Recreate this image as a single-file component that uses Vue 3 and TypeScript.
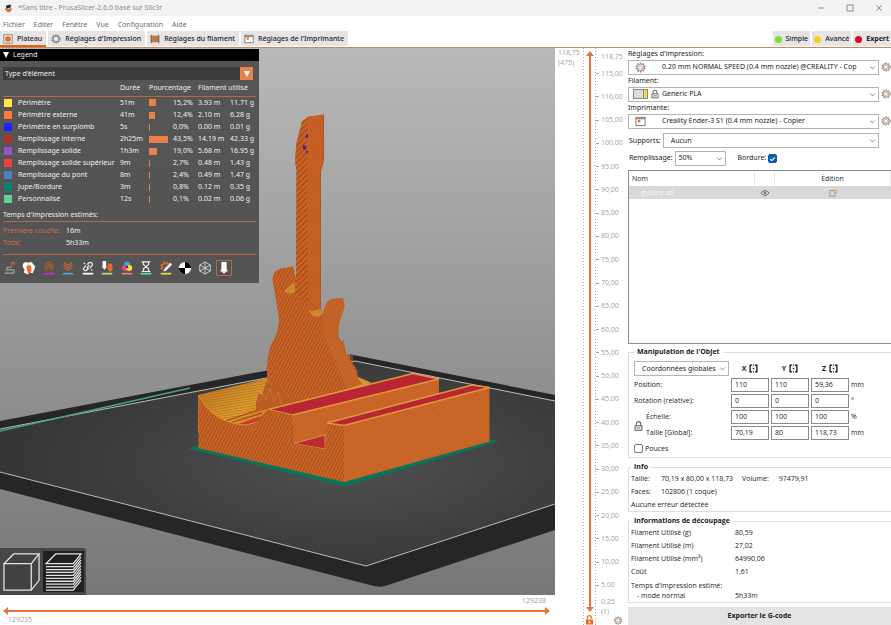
<script setup lang="ts">
import { ref } from 'vue'

interface LegendRow { color: string; name: string; time: string; bar: number; pct: string; m: string; g: string }

const menus = ['Fichier', 'Editer', 'Fenêtre', 'Vue', 'Configuration', 'Aide']
const tabs = ["Plateau", "Réglages d'Impression", 'Réglages du filament', "Réglages de l'Imprimante"]
const modes = [
  { label: 'Simple', color: '#7be03a' },
  { label: 'Avancé', color: '#f2d21a' },
  { label: 'Expert', color: '#d3101c' },
]
const legend: LegendRow[] = [
  { color: '#ffe64d', name: 'Périmètre', time: '51m', bar: 7, pct: '15,2%', m: '3.93 m', g: '11.71 g' },
  { color: '#ff7d38', name: 'Périmètre externe', time: '41m', bar: 6, pct: '12,4%', m: '2.10 m', g: '6.28 g' },
  { color: '#1f1fff', name: 'Périmètre en surplomb', time: '5s', bar: 1, pct: '0,0%', m: '0.00 m', g: '0.01 g' },
  { color: '#b03029', name: 'Remplissage interne', time: '2h25m', bar: 19, pct: '43,5%', m: '14.19 m', g: '42.33 g' },
  { color: '#9654cc', name: 'Remplissage solide', time: '1h3m', bar: 8, pct: '19,0%', m: '5.68 m', g: '16.95 g' },
  { color: '#f04040', name: 'Remplissage solide supérieur', time: '9m', bar: 1, pct: '2,7%', m: '0.48 m', g: '1.43 g' },
  { color: '#4d80ba', name: 'Remplissage du pont', time: '8m', bar: 1, pct: '2,4%', m: '0.49 m', g: '1.47 g' },
  { color: '#00876e', name: 'Jupe/Bordure', time: '3m', bar: 1, pct: '0,8%', m: '0.12 m', g: '0.35 g' },
  { color: '#5ed194', name: 'Personnalisé', time: '12s', bar: 1, pct: '0,1%', m: '0.02 m', g: '0.06 g' },
]
const heights = Array.from({ length: 23 }, (_, i) => `${115 - i * 5},00`)
const presets = [
  { id: 'print', label: "Réglages d'impression:", value: '0.20 mm NORMAL SPEED (0.4 mm nozzle) @CREALITY - Cop' },
  { id: 'filament', label: 'Filament:', value: 'Generic PLA' },
  { id: 'printer', label: 'Imprimante:', value: 'Creality Ender-3 S1 (0.4 mm nozzle) - Copier' },
]
const axes = ['X', 'Y', 'Z']
const transforms = ref([
  { label: 'Position:', values: ['110', '110', '59,36'], unit: 'mm', indent: false },
  { label: 'Rotation (relative):', values: ['0', '0', '0'], unit: '°', indent: false },
  { label: 'Échelle:', values: ['100', '100', '100'], unit: '%', indent: true },
  { label: 'Taille [Global]:', values: ['70,19', '80', '118,73'], unit: 'mm', indent: true },
])
const slicing = [
  ['Filament Utilisé (g)', '80,59'],
  ['Filament Utilisé (m)', '27,02'],
  ['Filament Utilisé (mm³)', '64990,06'],
  ['Coût', '1,61'],
]
const brim = ref(true)
const inches = ref(false)
</script>

<template>
  <div class="app">
    <svg class="defs" width="0" height="0" aria-hidden="true">
      <symbol id="gear" viewBox="0 0 12 12">
        <circle cx="6" cy="6" r="4.6" fill="none" stroke="#8a8583" stroke-width="1.6" stroke-dasharray="1.8 1.1" />
        <circle cx="6" cy="6" r="3.7" fill="#f7ece4" stroke="#8f8a88" stroke-width=".8" />
        <circle cx="6" cy="6" r="2" fill="#fff" stroke="#e3a37c" stroke-width=".9" />
      </symbol>
      <symbol id="printer" viewBox="0 0 12 12">
        <rect x="1" y="1.5" width="10" height="9" fill="#fff" stroke="#77706d" />
        <path d="M1 3h10" stroke="#77706d" />
        <path d="M3 4h3v2l-1.5 1.4L3 6z" fill="#e8743b" />
      </symbol>
      <symbol id="lock" viewBox="0 0 10 12">
        <path d="M2.6 6V3.6a2.4 2.4 0 0 1 4.8 0V6" fill="none" stroke="#6b6b6b" stroke-width="1.3" />
        <rect x="1.2" y="5.8" width="7.6" height="5" fill="#f4f4f4" stroke="#6b6b6b" stroke-width="1.2" />
        <path d="M3 8.3h4" stroke="#6b6b6b" />
      </symbol>
    </svg>

    <header class="titlebar">
      <svg class="logo" viewBox="0 0 10 10">
        <path d="M2 3.5C2.4 1 5 .4 8 1.2L7.4 4 3.6 5.4z" fill="#303030" />
        <path d="M8.6 4.2C9 7.6 7 9.6 3.6 9.2L2.4 6.8z" fill="#e5692b" />
        <path d="M1 5.6l2-1v3z" fill="#303030" />
      </svg>
      <h1>*Sans titre - PrusaSlicer-2.6.0 basé sur Slic3r</h1>
      <div class="wm">
        <button aria-label="Réduire"><svg viewBox="0 0 8 8"><path d="M1 4h6" /></svg></button>
        <button aria-label="Agrandir"><svg viewBox="0 0 8 8"><path d="M1 1h6v6H1z" /></svg></button>
        <button aria-label="Fermer"><svg viewBox="0 0 8 8"><path d="M1 1l6 6M7 1L1 7" /></svg></button>
      </div>
    </header>

    <nav class="menubar"><button v-for="m in menus" :key="m">{{ m }}</button></nav>

    <div class="tabbar">
      <button v-for="(t, i) in tabs" :key="t" class="tab" :class="{ active: i === 0 }">
        <svg v-if="i === 0" viewBox="0 0 12 12"><rect x="1" y="1" width="10" height="10" fill="#eee" stroke="#777" /><circle cx="6" cy="6" r="3.4" fill="#ed6b21" /></svg>
        <svg v-else-if="i === 1" viewBox="0 0 12 12"><circle cx="6" cy="6" r="4.8" fill="none" stroke="#777" stroke-width="1.4" stroke-dasharray="1.9 1.1" /><circle cx="6" cy="6" r="3.6" fill="#d8d4d2" stroke="#777" /><circle cx="6" cy="6" r="1.8" fill="#f4f0ee" /></svg>
        <svg v-else-if="i === 2" viewBox="0 0 12 12"><rect x="1" y="2" width="10" height="8" fill="#c17a48" /><path d="M1.500 1v10M10.500 1v10" stroke="#6d6560" stroke-width="1.2" /></svg>
        <svg v-else viewBox="0 0 12 12"><use href="#printer" /></svg>
        <span>{{ t }}</span>
      </button>
      <div class="modes">
        <button v-for="m in modes" :key="m.label" class="tab" :class="{ strong: m.label === 'Expert' }">
          <i class="dot" :style="{ background: m.color }"></i><span>{{ m.label }}</span>
        </button>
      </div>
    </div>

    <main class="body">
      <section class="viewer">
        <div class="scene">
          <svg class="model" viewBox="0 48 555 547" preserveAspectRatio="xMidYMid slice">
            <defs>
              <linearGradient id="bg" x1="0" y1="0" x2="0" y2="1"><stop offset="0" stop-color="#b9b9b9" /><stop offset="1" stop-color="#777" /></linearGradient>
              <radialGradient id="bed" cx=".62" cy=".5" r=".6"><stop offset="0" stop-color="#505050" /><stop offset=".6" stop-color="#404040" /><stop offset="1" stop-color="#363636" /></radialGradient>
              <linearGradient id="bowl" x1="0" y1="0" x2="1" y2=".5"><stop offset="0" stop-color="#b86d22" /><stop offset=".45" stop-color="#dda02d" /><stop offset="1" stop-color="#b9571f" /></linearGradient>
              <pattern id="steep" width="3" height="3" patternUnits="userSpaceOnUse" patternTransform="rotate(27)"><rect width="3" height="3" fill="#c86426" /><rect width="1" height="3" fill="#a9501e" /></pattern>
              <pattern id="slash" width="4" height="4" patternUnits="userSpaceOnUse" patternTransform="rotate(45)"><rect width="4" height="4" fill="#ca6424" /><rect width="1.400" height="4" fill="#a14a1a" /></pattern>
              <pattern id="back" width="3" height="3" patternUnits="userSpaceOnUse" patternTransform="rotate(-28)"><rect width="3" height="3" fill="#c96225" /><rect width="1" height="3" fill="#bb5821" /></pattern>
              <pattern id="fine" width="2.500" height="2.500" patternUnits="userSpaceOnUse" patternTransform="rotate(32)"><rect width="2.500" height="2.500" fill="#cc6829" /><rect width=".8" height="2.500" fill="#c05e23" /></pattern>
              <pattern id="rows" width="4" height="2.500" patternUnits="userSpaceOnUse" patternTransform="rotate(-9)"><rect width="4" height="1" fill="#a85a1b" opacity=".5" /></pattern>
            </defs>
            <rect x="-600" y="48" width="1755" height="547" fill="url(#bg)" />
            <path d="M0 421L351 354.500L555 395V530L385 586Q378 588 370 585L0 489z" fill="#262626" />
            <path d="M0 429L355 361L555 401V504L366 566L0 472z" fill="url(#bed)" />
            <path d="M555 401L355 361L0 429M0 472L366 566L555 504" fill="none" stroke="#b9bdbb" />
            <path d="M0 431L190 388" stroke="#4f9f87" stroke-width="1.300" />
            <path d="M188 448.500L198 446L344 480L489 439L499 441.500L344 486.500z" fill="#0b7359" />
            <path d="M198 395L268 378L300 376L366 384L300 425L198 432z" fill="url(#bowl)" />
            <path d="M198 395L268 378L300 400L265 418L198 425z" fill="url(#rows)" />
            <path d="M356 376L372 383L352 389z" fill="#d39330" />
            <path d="M238 424L262 416L262 420L246 425z" fill="#cb3836" />
            <path d="M225 421L262 409M230 423L262 413" stroke="#a33a20" />
            <path d="M256 403L259 393L262 395L266 382L300 386L302 404L268 409L256 412z" fill="#b95c23" />
            <path d="M259 402l4-8 3 6 4-12 4 14 4-10 4 14" fill="none" stroke="#c9712f" />
            <path d="M272.500 280Q273 271 280 268.500L293.500 266.500L295 276H321V307L322 315L327 302L332 299L342.500 298Q346 304 343 312Q336 327 339 338L344 344L346.500 355L350 354L351 362L356 368L357 377L362 384L300 403L288 400L280 388L268 384Q265 364 270 347Q278 334 279 320Q276 300 272.500 280z" fill="url(#steep)" />
            <path d="M327 302L332 299L342.500 298Q346 304 343 312Q336 327 339 338L326 340L322 315z" fill="#c66428" opacity=".75" />
            <path d="M326 340L339 340L346 354L352 366L361 384L347 388z" fill="#c5682a" opacity=".8" />
            <path d="M343.500 340V354M352 355V370M357 370V380" stroke="#c4622a" />
            <path d="M284 291Q288 288 291 284L295 283V292Q289 296 284 291z" fill="#cf8632" />
            <path d="M308 310Q314 312 321 308L322 315Q314 320 308 310z" fill="#cf8632" />
            <path d="M302 121.500L308.500 116.500L323.500 114.500V160L320.500 172V309L296 292L296.500 170L295 161L296.500 143z" fill="url(#back)" />
            <path d="M302 121.500L307 118L308 310L296 292L296.500 170L295 161L296.500 143z" fill="url(#slash)" />
            <path d="M323.500 114.500V160L320.500 172V309" fill="none" stroke="#b35420" />
            <path d="M303 145l3 1v4l-3-1zM306 134h2v4h-2zM306 151h2v2h-2z" fill="#56209a" />
            <path d="M292.500 415L439 379V412L325 449L292.500 443z" fill="url(#fine)" />
            <path d="M294 443.500L325 435V449z" fill="#bd2831" stroke="#e0a043" stroke-width=".8" />
            <path d="M268 409.500L413 373.500L439 379L292.500 415z" fill="#b82634" stroke="#e2963f" stroke-width="1.400" />
            <path d="M198.500 395Q212 423 246 425L257 422L268 409.500L292.500 415V443.500L325 449.500L327 423L344 425V482L198.500 448z" fill="url(#steep)" />
            <path d="M344 425L489.500 387.500V441.500L344 482z" fill="url(#fine)" />
            <path d="M390 431Q410 412 448 407M395 437L443 413M401 441L430 421" fill="none" stroke="#bb5f26" stroke-width=".8" stroke-dasharray="4 4" />
            <path d="M327 423L472 385L489.500 387.500L344 425.500z" fill="#b82634" stroke="#e2963f" stroke-width="1.400" />
            <path d="M198.500 395Q212 423 246 425L257 422" fill="none" stroke="#d58d36" />
          </svg>

          <aside class="legend">
            <div class="lg-title"><i class="tri"></i>Legend</div>
            <div class="lg-body">
              <button class="lg-select"><span>Type d'élément</span><span class="lg-arrow"><i class="tri"></i></span></button>
              <table>
                <colgroup><col class="c1" /><col class="c2" /><col class="c3" /><col class="c4" /><col class="c5" /><col class="c6" /><col /></colgroup>
                <thead><tr><th></th><th></th><th>Durée</th><th colspan="2">Pourcentage</th><th colspan="2">Filament utilisé</th></tr></thead>
                <tbody>
                  <tr v-for="r in legend" :key="r.name">
                    <td><i class="sw" :style="{ background: r.color }"></i></td>
                    <td>{{ r.name }}</td><td>{{ r.time }}</td>
                    <td><i class="bar" :style="{ width: r.bar + 'px' }"></i></td>
                    <td>{{ r.pct }}</td><td>{{ r.m }}</td><td>{{ r.g }}</td>
                  </tr>
                </tbody>
              </table>
              <p class="est">Temps d'impression estimés:</p>
              <dl><dt>Première couche:</dt><dd>16m</dd><dt>Total:</dt><dd>5h33m</dd></dl>
              <div class="tools">
                <button aria-label="Déplacements"><svg viewBox="0 0 16 16"><path d="M2 14h8q3 0 3-2t-3-2H6q-2 0-2-1.500T6 7h4" fill="none" stroke="#999" stroke-width="1.500" /><path d="M10 6V2h4M12 4V1M3 11h3" fill="none" stroke="#b5653a" stroke-width="1.500" /></svg></button>
                <button aria-label="Essuyage"><svg viewBox="0 0 16 16"><path d="M1 3l3-2 3 1 4-1 2 3 2 2-1 4-2 4-3-1-3 2-4-2 1-3-2-3z" fill="#fff" /><path d="M5 8l1-4 1 2 1-3 1 3 1-2 1 5-1 5H7z" fill="#ed6b21" /></svg></button>
                <button aria-label="Rétractions"><svg viewBox="0 0 16 16"><path d="M3 5l5-4 5 4M3 8l5-4 5 4M3 11l5-4 5 4" fill="none" stroke="#c5592a" stroke-width="1.300" /><path d="M2 14.500h12" stroke="#c12bc6" stroke-width="2" /></svg></button>
                <button aria-label="Réinsertions"><svg viewBox="0 0 16 16"><path d="M3 1l5 4 5-4M3 4l5 4 5-4M3 7l5 4 5-4" fill="none" stroke="#ce692f" stroke-width="1.300" /><path d="M2 14.500h12" stroke="#48a9d6" stroke-width="2" /></svg></button>
                <button aria-label="Coutures"><svg viewBox="0 0 16 16"><path d="M7 4l2-2q2-1 3.500.5T12 6l-2 2M9 8l-2 2q-2 2-3.500.5T4 7l2-2M6.500 8.500l3-4M3 2l1.500 1.500M11.500 9.500L13 11" fill="none" stroke="#eee" stroke-width="1.300" /><path d="M2 14.500h12" stroke="#fff" stroke-width="2" /></svg></button>
                <button aria-label="Changements d'outil"><svg viewBox="0 0 16 16"><path d="M3 0h4v6h1l-3 4-3-4h1z" fill="#fff" /><path d="M9 3h5v5h1l-3.500 5L8 8h1z" fill="#ed6b21" /><path d="M2 14.500h12" stroke="#d5cd74" stroke-width="2" /></svg></button>
                <button aria-label="Changements de couleur"><svg viewBox="0 0 16 16"><circle cx="8" cy="4" r="3.500" fill="#35a5e4" /><circle cx="5.500" cy="8" r="3.500" fill="#ed3f91" /><circle cx="10.500" cy="8" r="3.500" fill="#ffdc35" /><circle cx="8" cy="6.800" r="1.500" fill="#463838" /><path d="M2 14.500h12" stroke="#dc8b75" stroke-width="2" /></svg></button>
                <button aria-label="Pauses"><svg viewBox="0 0 16 16"><path d="M3 1h10M3 12h10M5 1v3l3 2.500L5 9v3M11 1v3L8 6.500 11 9v3" fill="none" stroke="#eee" stroke-width="1.300" /><path d="M2 14.500h12" stroke="#52e694" stroke-width="2" /></svg></button>
                <button aria-label="G-codes personnalisés"><svg viewBox="0 0 16 16"><path d="M4 9a4 4 0 1 1 7-5" fill="none" stroke="#ed6b21" stroke-width="3" stroke-dasharray="2.500 .8" /><path d="M5 12l1-3 7-7 2 2-7 7z" fill="#fff" /><path d="M2 14.500h12" stroke="#e5df3c" stroke-width="2" /></svg></button>
                <button aria-label="Centre de gravité"><svg viewBox="0 0 16 16"><circle cx="8" cy="8" r="7" fill="#fff" /><path d="M8 8V1a7 7 0 0 1 7 7zM8 8v7a7 7 0 0 1-7-7z" fill="#000" /></svg></button>
                <button aria-label="Coques"><svg viewBox="0 0 16 16"><path d="M8 1l6 3.500v7L8 15l-6-3.500v-7zM2 4.500L8 8l6-3.500M8 8v7M8 1v7M2 11.500L8 8l6 3.500" fill="none" stroke="#ddd" /></svg></button>
                <button aria-label="Marqueur d'outil" class="on"><svg viewBox="0 0 16 16"><path d="M5 1h6v9h1v2h-2l-1 2H7l-1-2H4v-2h1z" fill="#fff" /></svg></button>
              </div>
            </div>
          </aside>

          <div class="views">
            <button aria-label="Vue 3D"><svg viewBox="0 0 40 40"><path d="M2 12h28v27H2zM2 12L12 2h26L30 12M38 2v27L30 39" fill="#414141" stroke="#e4e4e4" stroke-width="1.300" /></svg></button>
            <button aria-label="Aperçu" class="on"><svg viewBox="0 0 40 40"><path d="M2 12L12 2h26L30 12zM2 15h28l8-10M2 18h28l8-10M2 21h28l8-10M2 24h28l8-10M2 27h28l8-10M2 30h28l8-10M2 33h28l8-10M2 36h28l8-10M2 39h28l8-10" fill="none" stroke="#e4e4e4" stroke-width="1.300" /></svg></button>
          </div>
        </div>
        <div class="hslider">
          <span class="hi">129238</span>
          <div class="htrack"><i class="hleft"></i><i class="hline"></i><i class="hright"></i></div>
          <span class="lo">129235</span>
        </div>
      </section>

      <section class="ruler">
        <div class="cur">118,75<br />(475)</div>
        <div class="vtrack">
          <i class="up"></i><i class="line"></i><i class="down"></i>
          <svg class="unlock" viewBox="0 0 10 11"><path d="M2.500 5V3a2.300 2.300 0 0 1 4.600 0v1" fill="none" stroke="#ed6b21" stroke-width="1.500" /><path d="M1 5h8v5.500H1z" fill="#ed6b21" /><path d="M4 7h2v2H4z" fill="#fff" /></svg>
        </div>
        <div class="scale">
          <span class="first">118,75</span>
          <div class="marks"><span v-for="h in heights" :key="h">{{ h }}</span></div>
          <span class="last">0,25<br />(1)</span>
          <svg class="gear"><use href="#gear" /></svg>
        </div>
      </section>

      <aside class="side">
        <div class="presets">
          <template v-for="p in presets" :key="p.id">
            <label :for="p.id">{{ p.label }}</label>
            <div class="prow">
              <div class="combo">
                <svg v-if="p.id === 'print'" class="pic"><use href="#gear" /></svg>
                <span v-else-if="p.id === 'filament'" class="pic fil"><i></i><svg><use href="#lock" /></svg></span>
                <svg v-else class="pic"><use href="#printer" /></svg>
                <select :id="p.id"><option>{{ p.value }}</option></select>
                <svg class="chev" viewBox="0 0 8 8"><path d="M1.500 3L4 5.500 6.500 3" /></svg>
              </div>
              <button class="gearbtn" aria-label="Modifier le préréglage"><svg><use href="#gear" /></svg></button>
            </div>
          </template>
        </div>
        <div class="supports">
          <label for="sup">Supports:</label>
          <div class="combo"><select id="sup"><option>Aucun</option></select><svg class="chev" viewBox="0 0 8 8"><path d="M1.500 3L4 5.500 6.500 3" /></svg></div>
        </div>
        <div class="infill">
          <label for="inf">Remplissage:</label>
          <div class="combo"><select id="inf"><option>50%</option></select><svg class="chev" viewBox="0 0 8 8"><path d="M1.500 3L4 5.500 6.500 3" /></svg></div>
          <label for="brim">Bordure:</label>
          <input id="brim" v-model="brim" type="checkbox" />
        </div>

        <div class="objects">
          <table>
            <colgroup><col /><col class="o2" /><col class="o3" /></colgroup>
            <thead><tr><th>Nom</th><th></th><th>Édition</th></tr></thead>
            <tbody><tr>
              <td class="file">guitare.stl</td>
              <td><svg viewBox="0 0 12 8"><path d="M1 4q5-6 10 0q-5 6-10 0z" fill="none" stroke="#777" stroke-width="1.200" /><circle cx="6" cy="4" r="1.700" fill="#777" /></svg></td>
              <td><svg viewBox="0 0 12 10"><path d="M7 2H2v7h7V6" fill="none" stroke="#8d8d8d" /><circle cx="9" cy="3" r="2" fill="#f7d7bf" stroke="#e8833f" stroke-width="1.200" /></svg></td>
            </tr></tbody>
          </table>
        </div>

        <fieldset class="manip">
          <legend>Manipulation de l'Objet</legend>
          <div class="mgrid">
            <div class="combo coord"><select aria-label="Coordonnées"><option>Coordonnées globales</option></select><svg class="chev" viewBox="0 0 8 8"><path d="M1.500 3L4 5.500 6.500 3" /></svg></div>
            <span v-for="a in axes" :key="a" class="axis"><b>{{ a }}</b><svg viewBox="0 0 10 10"><path d="M3.500 1.200H1.200v7.600h2.300M6.500 1.200h2.300v7.600H6.500" fill="none" stroke="#111" stroke-width="1.400" /><path d="M4.500 1.200h1M4.500 8.800h1M4.300 5h1.400" stroke="#111" stroke-width="1.400" /></svg></span>
            <span></span>
            <template v-for="t in transforms" :key="t.label">
              <span class="tl" :class="{ indent: t.indent }">{{ t.label }}</span>
              <input v-for="(a, i) in axes" :key="a" v-model="t.values[i]" type="text" :aria-label="t.label + ' ' + a" />
              <span class="unit">{{ t.unit }}</span>
            </template>
            <svg class="ratio"><use href="#lock" /></svg>
          </div>
          <label class="inches"><input v-model="inches" type="checkbox" />Pouces</label>
        </fieldset>

        <fieldset class="info">
          <legend>Info</legend>
          <p><span class="k">Taille:</span><span>70,19 x 80,00 x 118,73</span><span class="vol">Volume:</span><span>97479,91</span></p>
          <p><span class="k">Faces:</span><span>102806 (1 coque)</span></p>
          <p>Aucune erreur détectée</p>
        </fieldset>

        <fieldset class="slice">
          <legend>Informations de découpage</legend>
          <p v-for="s in slicing" :key="s[0]"><span class="k">{{ s[0] }}</span><span>{{ s[1] }}</span></p>
          <p class="time"><span class="k">Temps d'impression estimé:<br /><span class="mode">- mode normal</span></span><span>5h33m</span></p>
        </fieldset>

        <button class="export">Exporter le G-code</button>
      </aside>
    </main>
  </div>
</template>

<style>
body { margin: 0; background: #fff; }
</style>

<style scoped>
* { box-sizing: border-box; }
.app { min-height: 100vh; display: flex; flex-direction: column; background: #fff; color: #1c1c1c; font: 7px/10px "Open Sans", "Noto Sans", sans-serif; overflow: hidden; }
.titlebar, .menubar, .tabbar, .presets, .supports, .infill, .coord, .legend { font-family: "Noto Sans", "Open Sans", sans-serif; }
.defs { position: absolute; }
button { border: 0; background: none; padding: 0; font: inherit; color: inherit; }
svg { display: block; }
p, dl, dd, h1 { margin: 0; font: inherit; }
i { display: block; }
.titlebar { height: 16px; background: #f3f3f3; display: flex; align-items: center; padding: 0 8px 0 4px; color: #8b8b8b; }
.logo { width: 9px; height: 9px; margin-right: 5px; }
.wm { margin-left: auto; display: flex; gap: 21px; }
.wm svg { width: 8px; height: 8px; fill: none; stroke: #8f8f8f; stroke-width: 1; }
.menubar { height: 15px; display: flex; align-items: center; gap: 9px; padding: 2px 0 0 3px; color: #6c6c6c; }
.tabbar { height: 17px; display: flex; gap: 2px; border-bottom: 1px solid #c9855c; }
.tab { display: flex; align-items: center; gap: 4px; height: 15px; padding: 1px 4px 0 3px; background: #e6e4e4; font-weight: 500; }
.tab svg { width: 10px; height: 10px; }
.tab.active { height: 16px; border-bottom: 2px solid #e0601c; }
.modes { margin-left: auto; display: flex; gap: 2px; }
.modes .tab { padding: 1px 2px 0; }
.modes .strong { font-weight: 700; }
.dot { width: 7px; height: 7px; border-radius: 50%; }

.body { flex: 1; display: grid; grid-template-columns: minmax(0, 1fr) 73px 263px; }
.viewer { display: flex; flex-direction: column; }
.scene { position: relative; flex: 1; overflow: hidden; }
.model { position: absolute; inset: 0; width: 100%; height: 100%; }
.legend { position: absolute; left: 0; top: 1px; width: 259px; background: rgba(82, 82, 82, .97); color: #f0f0f0; }
.lg-title { height: 12px; background: #000; display: flex; align-items: center; gap: 4px; padding-left: 3px; }
.tri { border: 3px solid transparent; border-top: 6px solid #fff; border-bottom: 0; }
.lg-body { padding: 6px 3px; }
.lg-select { width: 250px; height: 13px; display: flex; align-items: center; justify-content: space-between; background: #3b3b3b; padding-left: 2px; }
.lg-arrow { width: 13px; height: 13px; background: #e9814b; display: grid; place-items: center; }
.legend table { width: 100%; border-collapse: collapse; table-layout: fixed; white-space: nowrap; }
.legend th { text-align: left; font-weight: 400; height: 16px; padding: 1px 0 0; border-bottom: 1px solid #b8683c; }
.legend td { height: 12px; padding: 0; }
.legend tbody tr:first-child td { height: 13px; }
.c1 { width: 15px; } .c2 { width: 102px; } .c3 { width: 29px; } .c4 { width: 24px; } .c5 { width: 25px; } .c6 { width: 32px; }
.sw { width: 8px; height: 8px; margin-left: 1px; }
.bar { height: 7px; background: #e9814b; }
.est { height: 17px; line-height: 19px; border-bottom: 1px solid #b8683c; }
.legend dl { display: grid; grid-template-columns: 63px 1fr; line-height: 12px; padding: 3px 0 5px; border-bottom: 1px solid #b8683c; }
.legend dt { color: #c9703f; }
.tools { display: grid; grid-template-columns: repeat(12, 1fr); width: 234px; margin-left: -3px; padding: 6px 0 2px; justify-items: center; }
.tools svg { width: 14px; height: 14px; }
.tools .on { outline: 1px solid #b8683c; }
.views { position: absolute; left: 0; bottom: 0; display: flex; gap: 1px; padding: 3px 2px 3px 1px; background: #474747; border-radius: 0 3px 0 0; }
.views button { width: 41px; height: 41px; display: grid; place-items: center; }
.views svg { width: 39px; height: 39px; }
.views .on { background: #202020; }

.hslider { height: 30px; display: flex; flex-direction: column; padding: 1px 3px 0; color: #a2a2a2; }
.hi { align-self: flex-end; margin-right: 6px; }
.lo { margin-left: 5px; }
.htrack { height: 10px; display: flex; align-items: center; margin-right: 2px; }
.hleft { border: 4px solid transparent; border-right: 5px solid #e8743b; border-left: 0; }
.hline { flex: 1; height: 2px; background: #e8743b; }
.hright { border: 4px solid transparent; border-left: 5px solid #e8743b; border-right: 0; }

.ruler { display: grid; grid-template-columns: 28px 13px 1fr; color: #a2a2a2; }
.cur { padding-left: 3px; }
.vtrack { display: flex; flex-direction: column; align-items: center; padding-top: 3px; background: repeating-linear-gradient(#aaa 0 1px, transparent 1px 3px) left top / 1px 100% no-repeat, repeating-linear-gradient(#aaa 0 1px, transparent 1px 3px) right top / 1px 100% no-repeat; }
.up { border: 4px solid transparent; border-bottom: 5px solid #e8743b; border-top: 0; }
.line { flex: 1; width: 2px; background: #e8743b; }
.down { border: 4px solid transparent; border-top: 5px solid #e8743b; border-bottom: 0; }
.unlock { width: 9px; height: 10px; margin-top: 3px; }
.scale { display: flex; flex-direction: column; padding: 4px 0 0; }
.scale > span { padding-left: 5px; }
.first { height: 10px; }
.marks { flex: 1; display: flex; flex-direction: column; }
.marks span { flex: 1; display: flex; align-items: center; gap: 2px; }
.marks span::before { content: ""; width: 3px; height: 1px; background: #aaa; }
.last { height: 19px; }
.gear { width: 10px; height: 9px; margin-left: 17px; }

.side { display: flex; flex-direction: column; min-width: 0; }
.presets { display: flex; flex-direction: column; }
.presets label { height: 11px; line-height: 12px; }
.prow { display: flex; align-items: center; gap: 2px; height: 16px; }
.combo { position: relative; flex: 1; height: 15px; min-width: 0; border: 1px solid #b4b4b4; display: flex; align-items: center; }
.presets .combo { flex: 0 0 251px; }
.combo select { appearance: none; border: 0; background: none; width: 100%; height: 13px; font: inherit; color: inherit; padding: 0 8px 0 7px; outline: 0; border-radius: 0; }
.presets select { padding-left: 33px; }
.chev { position: absolute; right: 2px; top: 3px; width: 7px; height: 7px; fill: none; stroke: #777; stroke-width: 1; pointer-events: none; }
.pic { position: absolute; left: 6px; top: 1px; width: 11px; height: 11px; }
.fil { left: 4px; width: 26px; display: flex; gap: 3px; align-items: center; }
.fil i { width: 15px; height: 10px; border: 1px solid #888; background: linear-gradient(90deg, #ddd 9px, #888 9px 10px, #f4dc3c 10px); }
.fil svg { width: 8px; height: 10px; }
.gearbtn svg { width: 10px; height: 10px; }
.supports { display: flex; align-items: center; gap: 2px; margin: 4px 12px 2px 1px; }
.infill { display: flex; align-items: center; gap: 2px; padding-left: 1px; height: 16px; }
.infill .combo { flex: 0 0 51px; }
.infill .combo select { padding-left: 3px; }
.infill .combo + label { margin-left: 10px; }
input[type="checkbox"] { appearance: none; margin: 0; width: 9px; height: 9px; border: 1px solid #777; border-radius: 2px; background: #fff; }
input[type="checkbox"]:checked { border-color: #0b5cad; background: #0b5cad; }
#brim:checked::after { content: ""; display: block; width: 4px; height: 2px; margin: 2px 1px; border: solid #fff; border-width: 0 0 1px 1px; transform: rotate(-45deg); }
.objects { flex: 1; min-height: 100px; margin-top: 4px; border: 1px solid #8c8c8c; border-right: 0; }
.objects table { width: 100%; border-collapse: collapse; table-layout: fixed; }
.objects th { height: 15px; font-weight: 400; padding: 0 3px; border-right: 1px solid #e8e8e8; }
.objects th:first-child { text-align: left; }
.objects td { height: 13px; padding: 0; background: #d9d9d9; }
.objects td.file { padding-left: 12px; color: #f6f6f6; }
.objects td svg { width: 10px; height: 8px; margin: 0 auto; }
.o2 { width: 20px; } .o3 { width: 116px; }

fieldset { margin: 0; min-width: 0; border: 1px solid #dedede; border-right: 0; padding: 0 0 0 2px; }
fieldset legend { font-weight: 700; padding: 0 3px; height: 10px; }
.manip { margin-top: 3px; padding-left: 5px; }
.mgrid { position: relative; display: grid; grid-template-columns: 95px 38px 38px 38px 20px; column-gap: 2px; row-gap: 2px; align-items: center; padding-top: 4px; }
.coord { height: 15px; }
.coord select { padding-left: 7px; }
.axis { display: flex; justify-content: center; align-items: center; gap: 3px; }
.axis svg { width: 9px; height: 9px; }
.mgrid input { width: 100%; height: 14px; border: 1px solid #8a8a8a; padding: 0 3px 2px; font: inherit; color: inherit; outline: 0; border-radius: 0; }
.indent { padding-left: 12px; }
.ratio { position: absolute; left: 0; top: 63px; width: 9px; height: 12px; }
.inches { display: flex; align-items: center; gap: 2px; height: 17px; }
.info { margin-top: 4px; }
.info p { display: flex; line-height: 13px; }
.info .k { width: 30px; }
.vol { margin: 0 10px 0 9px; }
.slice { margin-top: 4px; }
.slice p { display: flex; line-height: 13px; }
.slice .k { width: 104px; white-space: nowrap; }
.slice .time { line-height: 10px; align-items: flex-end; padding: 3px 0 1px; }
.mode { padding-left: 6px; }
.export { height: 18px; margin-top: 4px; background: #e3e3e3; font-weight: 700; }
</style>
